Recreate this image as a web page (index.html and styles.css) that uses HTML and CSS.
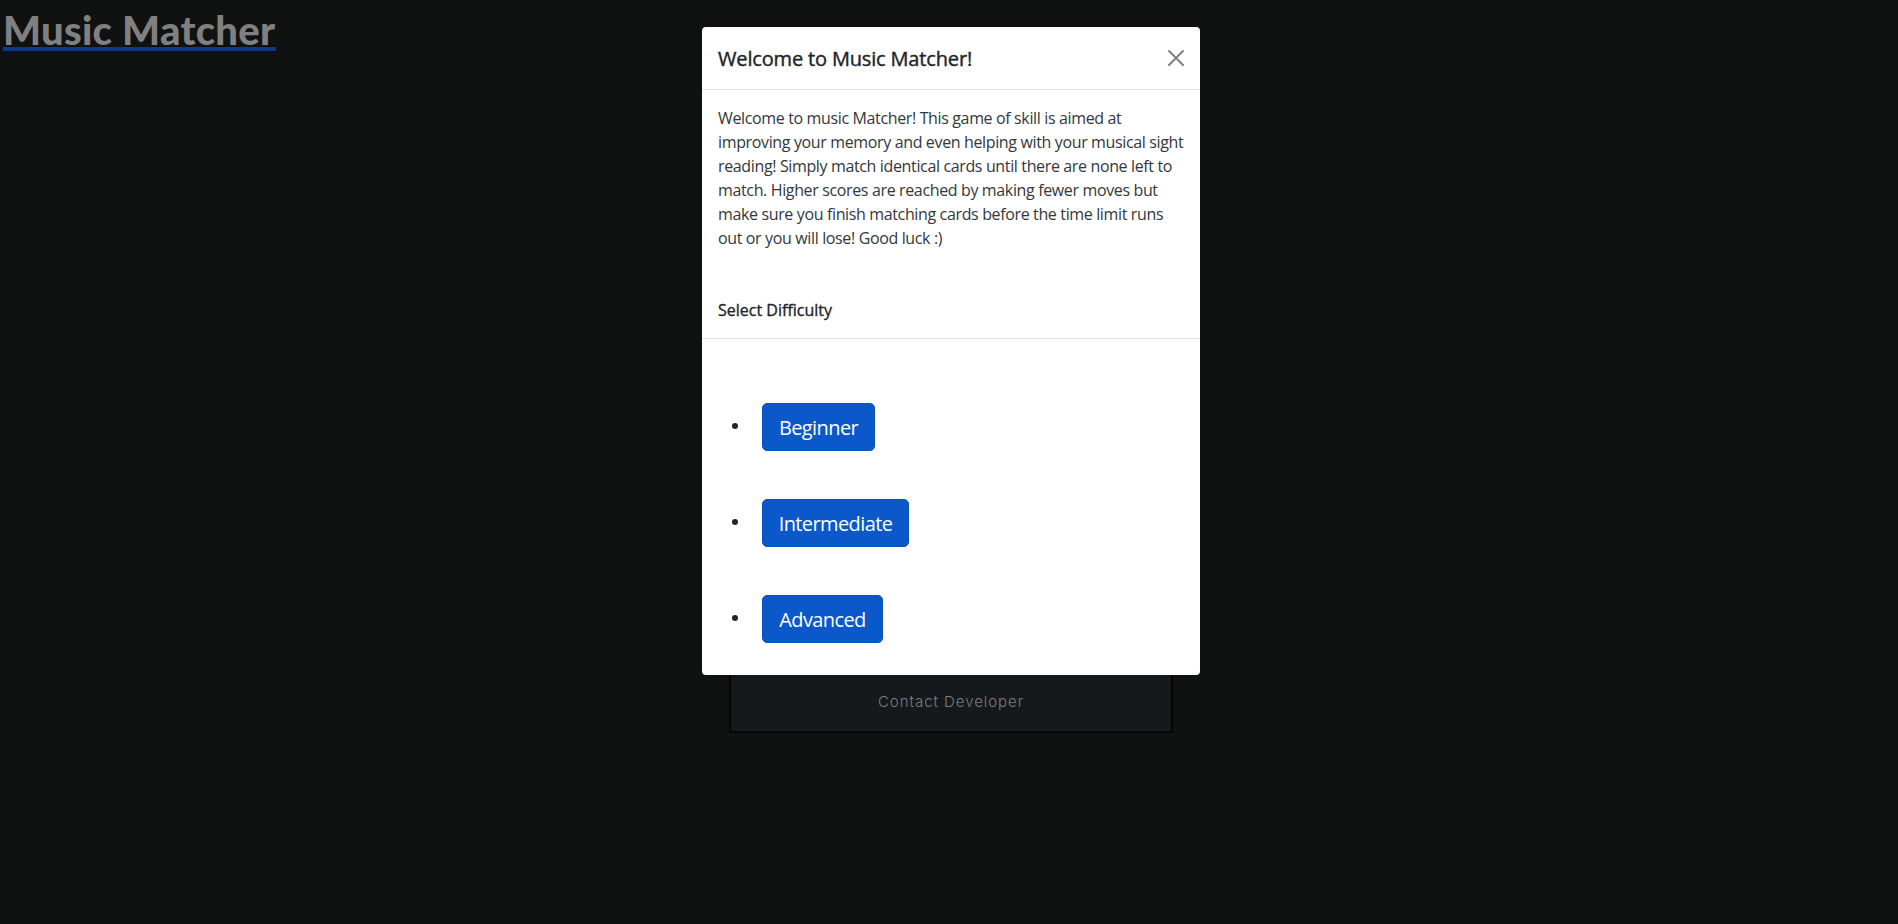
FILE: index.html
```html
<!DOCTYPE html>
<html lang="en">
<head>
<meta charset="utf-8">
<title>Music Matcher</title>
<link rel="stylesheet" href="styles.css">
</head>
<body>
<header class="site-header"><a class="brand">Music Matcher</a></header>
<footer class="contact"><a class="contact-link">Contact Developer</a></footer>
<div class="modal">
  <div class="modal-header">
    <h5 class="modal-title">Welcome to Music Matcher!</h5>
    <svg class="close" viewBox="0 0 16 16"><path d="M.293.293a1 1 0 011.414 0L8 6.586 14.293.293a1 1 0 111.414 1.414L9.414 8l6.293 6.293a1 1 0 01-1.414 1.414L8 9.414l-6.293 6.293a1 1 0 01-1.414-1.414L6.586 8 .293 1.707a1 1 0 010-1.414z"/></svg>
  </div>
  <div class="modal-body">
    <p class="intro">Welcome to music Matcher! This game of skill is aimed at<br>improving your memory and even helping with your musical sight<br>reading! Simply match identical cards until there are none left to<br>match. Higher scores are reached by making fewer moves but<br>make sure you finish matching cards before the time limit runs<br>out or you will lose! Good luck :)</p>
    <h6 class="subtitle">Select Difficulty</h6>
  </div>
  <ul class="levels">
    <li class="level"><button class="btn beginner">Beginner</button></li>
    <li class="level"><button class="btn intermediate">Intermediate</button></li>
    <li class="level"><button class="btn advanced">Advanced</button></li>
  </ul>
</div>
</body>
</html>
```
FILE: styles.css
```css
* { box-sizing: border-box; }
body {
  margin: 0;
  height: 924px;
  overflow: hidden;
  background: #101211;
  color: #212529;
  font-family: "Open Sans", "Noto Sans", sans-serif;
  display: flex;
  flex-direction: column;
  align-items: center;
}
.site-header { align-self: flex-start; padding: 7px 0 0 3px; height: 640px; }
.brand {
  display: block;
  width: 273px;
  height: 44px;
  border-bottom: 4px solid #083a85;
  color: #808080;
  font: 900 40px/46px Lato, sans-serif;
  letter-spacing: 0.3px;
  white-space: nowrap;
}
.contact {
  width: 444px;
  height: 93px;
  margin-left: 4px;
  padding-top: 48px;
  border: 2px solid #050606;
  background: #15191c;
  text-align: center;
}
.contact-link {
  color: #7c7d7d;
  font: 300 15px/24px Inter, sans-serif;
  letter-spacing: 0.95px;
}
.modal {
  position: absolute;
  left: 702px;
  top: 27px;
  width: 498px;
  height: 648px;
  border-radius: 4px;
  background: #fff;
}
.modal-header {
  height: 63px;
  padding: 0 16px;
  display: flex;
  align-items: center;
  justify-content: space-between;
  border-bottom: 1px solid #dee2e6;
}
.modal-title {
  margin: 0;
  padding-top: 1px;
  font-size: 20px;
  font-weight: 400;
  letter-spacing: -0.16px;
  -webkit-text-stroke: 0.4px #212529;
  white-space: nowrap;
}
.close { width: 16px; height: 16px; fill: #808080; }
.modal-body { height: 249px; padding: 16px; border-bottom: 1px solid #dee2e6; }
.intro {
  margin: 0;
  color: #33373b;
  font-size: 16px;
  line-height: 24px;
  letter-spacing: -0.36px;
  white-space: nowrap;
}
.subtitle {
  margin: 48px 0 0;
  font-size: 16px;
  line-height: 24px;
  font-weight: 400;
  -webkit-text-stroke: 0.35px #212529;
}
.levels {
  margin: 0;
  padding: 64px 0 0 24px;
  list-style: none;
  display: flex;
  flex-direction: column;
  gap: 48px;
}
.level { display: flex; gap: 24px; }
.level::before {
  content: "";
  width: 6px;
  height: 6px;
  margin: 20px 0 0 6px;
  border-radius: 50%;
  background: #212529;
}
.btn {
  height: 48px;
  padding: 2px 0 0;
  border: 1px solid #0a53be;
  border-radius: 5px;
  background: #0a58ca;
  color: #fff;
  font: 400 20px/30px "Open Sans", sans-serif;
  letter-spacing: -0.6px;
}
.beginner { width: 113px; }
.intermediate { width: 147px; }
.advanced { width: 121px; }
```
